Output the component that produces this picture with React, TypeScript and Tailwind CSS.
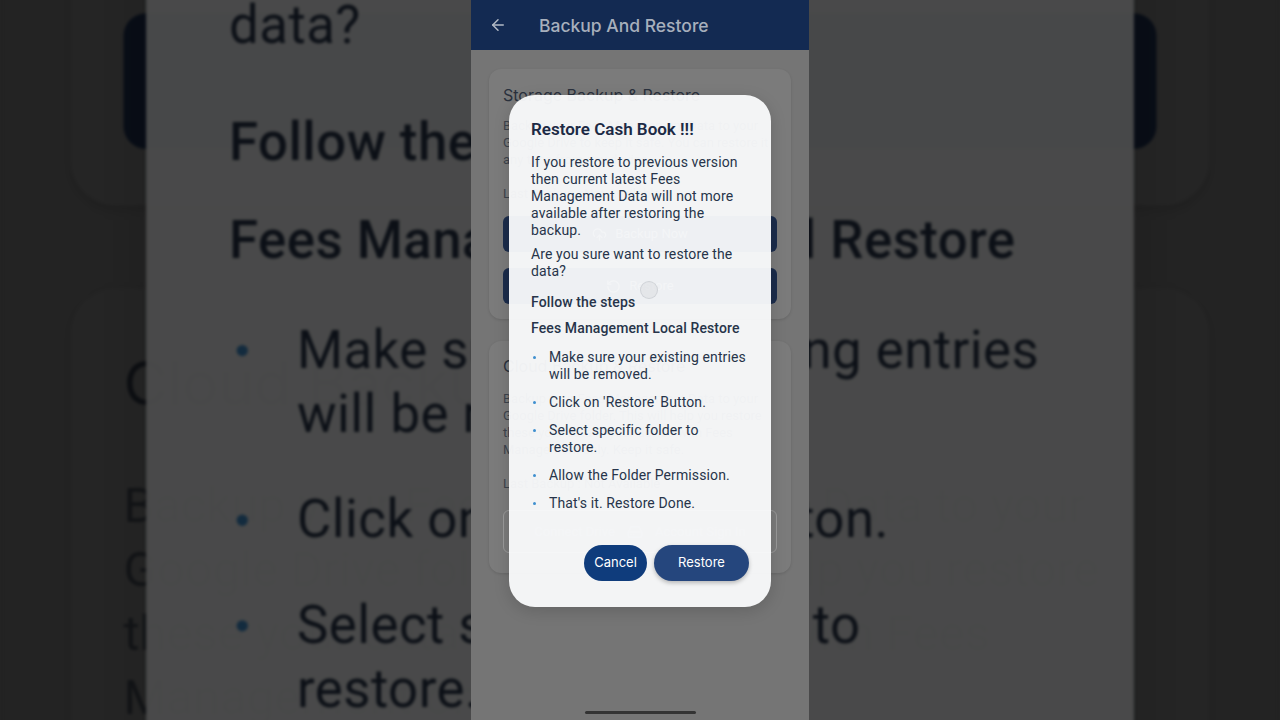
import { ArrowLeft, CloudUpload, RotateCcw, HardDrive } from 'lucide-react';

const steps = [
  'Make sure your existing entries will be removed.',
  "Click on 'Restore' Button.",
  'Select specific folder to restore.',
  'Allow the Folder Permission.',
  "That's it. Restore Done.",
];

function RestoreDialog() {
  return (
    <div className="w-[262px] rounded-[26px] bg-[#fafbfc]/[0.95] px-[22px] pt-[24px] pb-[26px] shadow-[0_4px_16px_rgba(0,0,0,0.15)] font-['Roboto',sans-serif] tracking-[0.12px] text-[#27344a]">
      <h2 className="text-[17px] leading-[20px] font-semibold tracking-normal text-[#1c2a45]">Restore Cash Book !!!</h2>
      <p className="mt-[15px] text-[14px] leading-[17px]">
        If you restore to previous version then current latest Fees Management Data will not more available after
        restoring the backup.
      </p>
      <p className="mt-[7px] text-[14px] leading-[17px]">Are you sure want to restore the data?</p>
      <p className="mt-[14px] text-[14px] leading-[17px] font-medium">Follow the steps</p>
      <p className="mt-[9px] text-[14px] leading-[17px] font-medium">Fees Management Local Restore</p>
      <ul className="mt-[12px] flex flex-col gap-[11px]">
        {steps.map((s) => (
          <li key={s} className="flex items-start text-[14px] leading-[17px]">
            <span className="flex h-[17px] w-[18px] shrink-0 items-center pl-[2px]">
              <span className="h-[3px] w-[3px] rounded-full bg-[#3f8fcf]" />
            </span>
            <span>{s}</span>
          </li>
        ))}
      </ul>
      <div className="mt-[33px] flex justify-end gap-[7px] font-['Inter',sans-serif] text-[13px] tracking-normal text-white">
        <button className="h-[36px] w-[63px] rounded-full bg-[#0f3c7c]">Cancel</button>
        <button className="h-[36px] w-[95px] rounded-full bg-[#25467d] shadow-[0_2px_4px_rgba(0,0,0,0.25)]">
          Restore
        </button>
      </div>
    </div>
  );
}

function Screen() {
  return (
    <div className="relative h-[720px] w-[338px] shrink-0 overflow-hidden bg-[#757575] font-['Roboto',sans-serif]">
      <header className="flex h-[50px] items-center bg-[#132a52] px-[18px]">
        <ArrowLeft size={18} strokeWidth={2} className="text-[#b3bac6]" />
        <span className="mt-[2px] ml-[32px] font-['Inter',sans-serif] text-[17.5px] font-medium text-[#a7afbc]">
          Backup And Restore
        </span>
      </header>

      <div className="flex flex-col gap-[22px] px-[18px] pt-[19px]">
        <section className="rounded-[12px] bg-[#7b7b7b] px-[14px] pt-[16px] pb-[15px] shadow-[0_1px_3px_rgba(0,0,0,0.12)]">
          <h3 className="font-['Inter',sans-serif] text-[16px] leading-[20px] text-[#2a313d]">
            Storage Backup &amp; Restore
          </h3>
          <p className="mt-[12px] text-[13px] leading-[17px] text-[#3c424b]">
            Backup your Fees Management Data to your Google Drive to keep it safe. You can restore it any time from
            any device.
          </p>
          <p className="mt-[17px] text-[13px] leading-[17px] text-[#3c424b]">Last Backup : Not Available</p>
          <button className="mt-[14px] flex h-[36px] w-full items-center justify-center gap-2 rounded-[6px] bg-[#1b2c4b] text-[13px] text-[#7c8597]">
            <CloudUpload size={15} /> Backup Now
          </button>
          <button className="mt-[16px] flex h-[36px] w-full items-center justify-center gap-2 rounded-[6px] bg-[#1b2c4b] text-[13px] text-[#7c8597]">
            <RotateCcw size={15} /> Restore
          </button>
        </section>

        <section className="rounded-[12px] bg-[#7b7b7b] px-[14px] pt-[15px] pb-[20px] shadow-[0_1px_3px_rgba(0,0,0,0.12)]">
          <h3 className="font-['Inter',sans-serif] text-[16px] leading-[20px] text-[#2a313d]">
            Cloud Backup &amp; Restore
          </h3>
          <p className="mt-[14px] text-[13px] leading-[17px] text-[#3c424b]">
            Backup your Fees Management Data to your Google Drive folder. This will help you restore these your
            data in your device with Fees Management only. Keep it safe.
          </p>
          <p className="mt-[17px] text-[13px] leading-[17px] text-[#3c424b]">Last Backup : Not Available</p>
          <button className="mt-[18px] flex h-[43px] w-full items-center justify-center gap-3 rounded-[6px] border border-[#9a9a9a] text-[13px] text-[#8a8f96]">
            Connect Drive <HardDrive size={16} /> Account Sign In
          </button>
        </section>
      </div>

      <div className="absolute inset-0 flex items-start justify-center pt-[95px]">
        <RestoreDialog />
      </div>

      <span className="absolute top-[281px] left-[169px] h-[18px] w-[18px] rounded-full border border-[#c8cbd0]/70 bg-[#d9dbdf]/50" />

      <span className="absolute bottom-[6px] left-[114px] h-[3px] w-[111px] rounded-full bg-[#333333]" />
    </div>
  );
}

export default function App() {
  return (
    <div className="relative h-[720px] w-[1280px] overflow-hidden bg-[#232323]">
      <div className="flex h-full w-full items-center justify-center">
        <div className="scale-[3.77] blur-[0.4px] brightness-[0.3]">
          <Screen />
        </div>
      </div>
      <div className="absolute inset-0 flex justify-center">
        <Screen />
      </div>
    </div>
  );
}
